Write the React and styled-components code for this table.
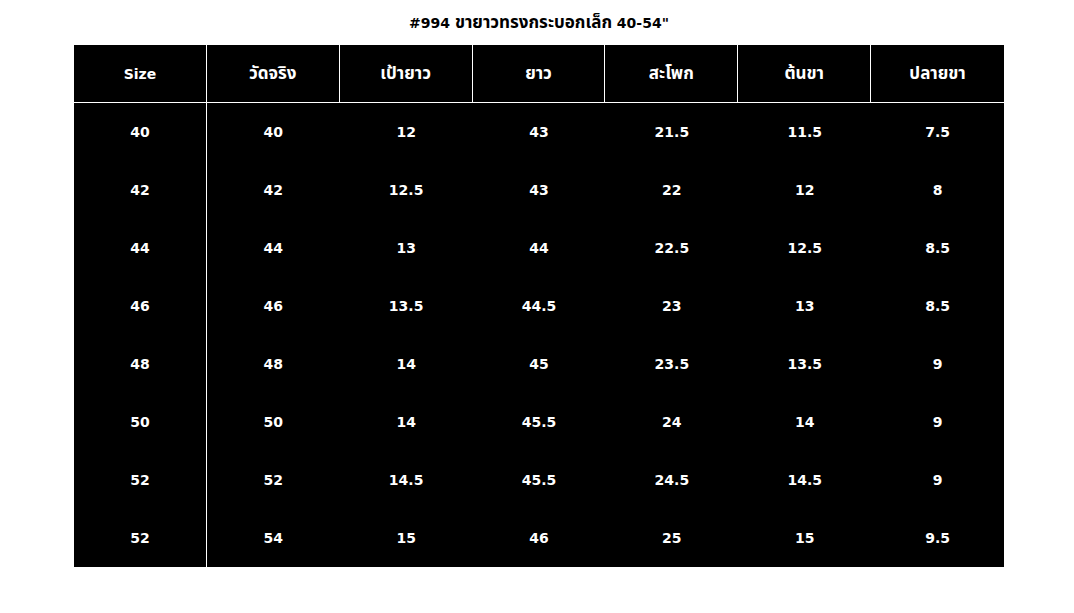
import React from 'react';
import styled, { createGlobalStyle } from 'styled-components';

const GlobalStyle = createGlobalStyle`
  html, body {
    margin: 0;
    padding: 0;
    background: #ffffff;
  }
  body {
    font-family: "DejaVu Sans", "Noto Sans Thai", "Noto Sans", sans-serif;
  }
`;

const headers = ['Size', 'วัดจริง', 'เป้ายาว', 'ยาว', 'สะโพก', 'ต้นขา', 'ปลายขา'];

const rows = [
  ['40', '40', '12', '43', '21.5', '11.5', '7.5'],
  ['42', '42', '12.5', '43', '22', '12', '8'],
  ['44', '44', '13', '44', '22.5', '12.5', '8.5'],
  ['46', '46', '13.5', '44.5', '23', '13', '8.5'],
  ['48', '48', '14', '45', '23.5', '13.5', '9'],
  ['50', '50', '14', '45.5', '24', '14', '9'],
  ['52', '52', '14.5', '45.5', '24.5', '14.5', '9'],
  ['52', '54', '15', '46', '25', '15', '9.5'],
];

const Page = styled.div`
  width: 1074px;
  padding: 12px 0 0 74px;
  box-sizing: border-box;
`;

const Title = styled.h1`
  margin: 0;
  width: 930px;
  height: 33px;
  font-size: 14px;
  font-weight: bold;
  color: #000;
  text-align: center;
  line-height: 20px;
`;

// Thai glyphs fall back to a smaller face, so bump them up
const Thai = styled.span`
  font-size: 17px;
  font-weight: bold;
`;

const Table = styled.div`
  width: 930px;
  background: #000;
  display: grid;
  grid-template-columns: repeat(7, 1fr);
`;

const HeadCell = styled.div`
  height: 57px;
  display: flex;
  align-items: center;
  justify-content: center;
  color: #fff;
  font-size: 14px;
  font-weight: bold;
  border-bottom: 1px solid #fff;
  border-right: ${(p) => (p.$last ? 'none' : '1px solid #fff')};
`;

const Cell = styled.div`
  height: 58px;
  display: flex;
  align-items: center;
  justify-content: center;
  color: #fff;
  font-size: 14px;
  font-weight: bold;
  border-right: ${(p) => (p.$divider ? '1px solid #fff' : 'none')};
`;

export default function App() {
  return (
    <Page>
      <GlobalStyle />
      <Title>#994 <Thai>ขายาวทรงกระบอกเล็ก</Thai> 40-54"</Title>
      <Table>
        {headers.map((h, i) => (
          <HeadCell key={h} $last={i === headers.length - 1}>
            {i === 0 ? h : <Thai>{h}</Thai>}
          </HeadCell>
        ))}
        {rows.map((row, r) =>
          row.map((v, c) => (
            <Cell key={`${r}-${c}`} $divider={c === 0}>{v}</Cell>
          ))
        )}
      </Table>
    </Page>
  );
}
